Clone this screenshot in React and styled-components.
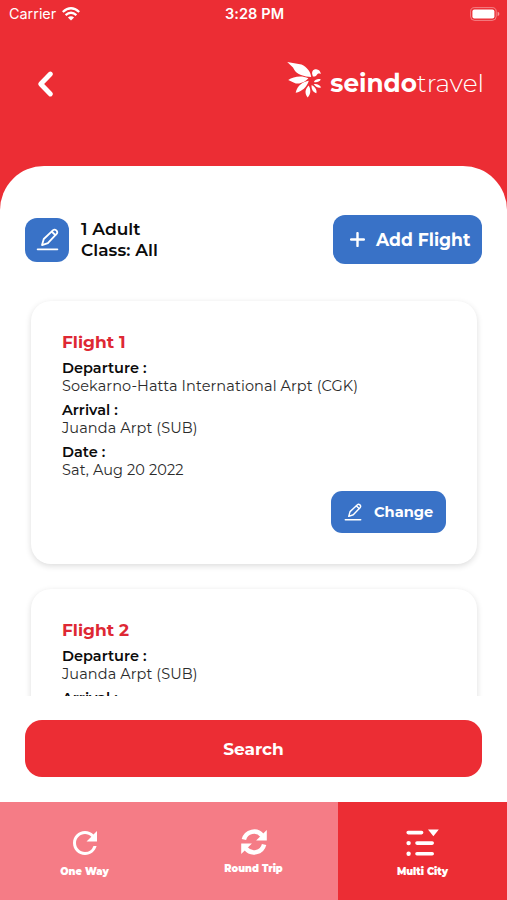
import React from "react";
import styled, { createGlobalStyle } from "styled-components";
import { MdRefresh } from "react-icons/md";

const colors = {
    red: "#ec2d34",
    redFaded: "#f57c86",
    blue: "#3972c7",
    title: "#de2834",
    text: "#0b0b0b",
    textSoft: "#2b2b2b",
};

const GlobalStyle = createGlobalStyle`
    * {
        box-sizing: border-box;
    }
    body {
        margin: 0;
        background-color: #fff;
        font-family: Montserrat, Inter, sans-serif;
    }
    button {
        border: none;
        padding: 0;
        background: none;
        font-family: inherit;
        color: inherit;
    }
    svg {
        display: block;
        flex-shrink: 0;
    }
`;

const Screen = styled.div`
    width: 507px;
    height: 900px;
    overflow: hidden;
    display: flex;
    flex-direction: column;
    background-color: ${colors.red};
    color: #fff;
`;

const Label = styled.span`
    font-size: ${(props) => props.$size}px;
    font-weight: ${(props) => props.$weight || 600};
    letter-spacing: ${(props) => props.$spacing || 0}px;
    line-height: ${(props) => props.$line || 20}px;
    color: ${(props) => props.$color || "inherit"};
    white-space: nowrap;
`;

const StatusBar = styled.div`
    height: 28px;
    padding: 0 7px 0 9px;
    display: grid;
    grid-template-columns: 1fr auto 1fr;
    align-items: center;
    font-family: Inter, Roboto, sans-serif;
`;

const Carrier = styled.div`
    display: flex;
    align-items: center;
    gap: 6px;
`;

const BatterySlot = styled.div`
    justify-self: end;
`;

const Header = styled.header`
    height: 138px;
    padding: 31px 23px 0 36px;
    display: flex;
    justify-content: space-between;
    align-items: flex-start;
`;

const BackButton = styled.button`
    margin-top: 11px;
`;

const Brand = styled.div`
    display: flex;
    align-items: flex-start;
    gap: 8px;
`;

const BrandName = styled.div`
    display: flex;
    margin-top: 8px;
`;

const Sheet = styled.main`
    height: 636px;
    padding: 49px 25px 0;
    background-color: #fff;
    border-radius: 44px 44px 0 0;
    color: ${colors.text};
    display: flex;
    flex-direction: column;
`;

const Toolbar = styled.div`
    height: 49px;
    display: flex;
    align-items: center;
`;

const EditTile = styled.button`
    width: 44px;
    height: 44px;
    margin-right: 12px;
    border-radius: 12px;
    background-color: ${colors.blue};
    color: #fff;
    display: grid;
    place-items: center;
`;

const Summary = styled.div`
    flex: 1;
    display: flex;
    flex-direction: column;
`;

const AddButton = styled.button`
    width: 149px;
    height: 49px;
    padding-left: 17px;
    border-radius: 12px;
    background-color: ${colors.blue};
    color: #fff;
    display: flex;
    align-items: center;
    gap: 11px;
`;

const FlightList = styled.div`
    height: 432px;
    margin: 0 -25px;
    padding: 37px 30px 0 31px;
    overflow: hidden;
`;

const Card = styled.section`
    height: 263px;
    margin-bottom: 24.5px;
    padding: 31px;
    border-radius: 20px;
    background-color: #fff;
    box-shadow: 0 2px 6px rgba(0, 0, 0, 0.14);
    display: flex;
    flex-direction: column;
`;

const Field = styled.div`
    margin-bottom: 6px;
    display: flex;
    flex-direction: column;
`;

const Fields = styled.div`
    margin-top: 7px;
`;

const ChangeButton = styled.button`
    width: 115px;
    height: 42px;
    margin-top: auto;
    padding-left: 13px;
    align-self: flex-end;
    border-radius: 11px;
    background-color: ${colors.blue};
    color: #fff;
    display: flex;
    align-items: center;
    gap: 12px;
`;

const SearchButton = styled.button`
    height: 57px;
    margin-top: 24px;
    border-radius: 17px;
    background-color: ${colors.red};
    color: #fff;
`;

const TabBar = styled.nav`
    height: 98px;
    display: grid;
    grid-template-columns: 169px 169px 169px;
    background-color: #fff;
`;

const Tab = styled.button`
    background-color: ${(props) => (props.$active ? colors.red : colors.redFaded)};
    color: #fff;
    display: flex;
    flex-direction: column;
    align-items: center;
    justify-content: flex-start;
    padding-top: 22px;
`;

const TabIcon = styled.div`
    height: ${(props) => props.$height}px;
    display: flex;
    align-items: center;
`;

const WifiIcon = () => (
    <svg width="18" height="14" viewBox="0 0 18 14" fill="none" stroke="#fff" strokeWidth="2.3">
        <path d="M0.8 5Q9-2.4 17.2 5" />
        <path d="M3.6 8.2Q9 3.4 14.4 8.2" />
        <path d="M5.9 10.4Q9 8 12.1 10.4L9 13.6Z" fill="#fff" stroke="none" />
    </svg>
);

const BatteryIcon = () => (
    <svg width="30" height="14" viewBox="0 0 30 14">
        <rect x="0.6" y="0.6" width="25.6" height="12.8" rx="4" fill="none" stroke="#fff" strokeOpacity="0.4" />
        <rect x="2.4" y="2.4" width="22" height="9.2" rx="2" fill="#fff" />
        <path d="M27.6 4.8Q29.4 5.4 29.4 7T27.6 9.2Z" fill="#fff" fillOpacity="0.5" />
    </svg>
);

const BackIcon = () => (
    <svg width="20" height="28" viewBox="0 0 20 28" fill="none" stroke="#fff" strokeWidth="4.9" strokeLinecap="round" strokeLinejoin="round">
        <path d="M14.4 4L4.7 14L14.4 24" />
    </svg>
);

const BirdLogo = () => (
    <svg width="35" height="39" viewBox="0 -1.6 35 39" fill="#fff">
        <path d="M0.2 1.5L14.5 3.8C20 6.6 23.6 10.8 24.2 16.3C17.5 15.9 9.5 13.9 7.1 8.8L6 6.8Z" />
        <path d="M25.3 14C24.5 10.6 26.3 8.4 29.2 8.6C31.8 8.8 33.3 10.4 33.9 13.4C31.5 12.5 30.6 12.8 29.6 14.6C28.7 15.8 27.3 16 25.9 16Z" />
        <path d="M1.2 19.5C6.5 15.9 14.5 14.7 21.4 17.7C18.2 21.7 11.5 24.4 7.1 22.1Z" />
        <path d="M21.8 20.2C15.9 21.2 10 24.9 8.7 32.2C14.9 31.2 20 26.2 21.8 20.2Z" />
        <path d="M21.6 25C17.9 28.8 17.4 33.4 20.7 36.8C23.8 33.6 24.2 29 21.6 25Z" />
        <path d="M24.6 24.5C24.2 28.4 25.7 31.6 29.4 32.6C30.1 29.2 28 26.3 24.6 24.5Z" />
        <path d="M26.7 23.4C28.3 26.2 31 27.6 34.2 27C32.8 24.2 30.1 22.9 26.7 23.4Z" />
        <path d="M26.9 21.3C29.1 21.9 32.5 21.4 33.8 18.8C30.7 17.9 28.3 18.9 26.9 21.3Z" />
    </svg>
);

const PencilIcon = ({ size }) => (
    <svg width={size} height={size} viewBox="0 0 24 24" fill="none" stroke="currentColor" strokeWidth="1.9" strokeLinejoin="round" strokeLinecap="round">
        <path d="M6.3 17.8L8.1 11.5L17.9 2.3Q19.4 0.9 21.2 2.5Q22.9 4.2 21.7 5.9L12.4 15.7Z" />
        <path d="M16.6 3.9L20.2 7.4" />
        <path d="M1.7 22.3H22.3" />
    </svg>
);

const PlusIcon = () => (
    <svg width="15" height="15" viewBox="0 0 15 15" stroke="currentColor" strokeWidth="2.4" strokeLinecap="round">
        <path d="M7.5 1.1V13.9M1.1 7.5H13.9" />
    </svg>
);

const RoundTripIcon = () => (
    <svg width="26" height="26" viewBox="0 0 26 26" fill="#fff">
        <path d="M2.9 10.6A10.4 10.4 0 0 1 21.2 6.6M23.1 15.4A10.4 10.4 0 0 1 4.8 19.4" fill="none" stroke="#fff" strokeWidth="4.5" />
        <path d="M25.8 1V11.5H15.1ZM0.2 25V14.5H10.9Z" />
    </svg>
);

const MultiCityIcon = () => (
    <svg width="34" height="28" viewBox="0 0 34 28" fill="#fff" stroke="#fff">
        <path d="M2.2 3.6H15.6M11 14.1H26.2M11 24.8H26.2" strokeWidth="3.6" strokeLinecap="round" />
        <circle cx="2.6" cy="14.1" r="2.2" stroke="none" />
        <circle cx="2.6" cy="24.8" r="2.2" stroke="none" />
        <path d="M22 0.6H32.8L27.4 7.3Z" stroke="none" />
    </svg>
);

const flights = [
    {
        departure: "Soekarno-Hatta International Arpt (CGK)",
        arrival: "Juanda Arpt (SUB)",
        date: "Sat, Aug 20 2022",
    },
    {
        departure: "Juanda Arpt (SUB)",
    },
];

const FlightField = ({ name, value }) => (
    <Field>
        <Label $size={14.5} $line={18}>{name} :</Label>
        {value && (
            <Label $size={14.5} $line={18} $weight={400} $spacing={0.1} $color={colors.textSoft}>{value}</Label>
        )}
    </Field>
);

const FlightCard = ({ number, flight }) => (
    <Card>
        <Label $size={17} $weight={700} $color={colors.title}>Flight {number}</Label>
        <Fields>
            <FlightField name="Departure" value={flight.departure} />
            <FlightField name="Arrival" value={flight.arrival} />
            {flight.date && <FlightField name="Date" value={flight.date} />}
        </Fields>
        {flight.date && (
            <ChangeButton>
                <PencilIcon size={18} />
                <Label $size={14.6} $weight={700}>Change</Label>
            </ChangeButton>
        )}
    </Card>
);

const App = () => (
    <>
        <GlobalStyle />
        <Screen>
            <StatusBar>
                <Carrier>
                    <Label $size={14.4} $weight={400}>Carrier</Label>
                    <WifiIcon />
                </Carrier>
                <Label $size={14.5} $weight={600} $spacing={0.1}>3:28 PM</Label>
                <BatterySlot>
                    <BatteryIcon />
                </BatterySlot>
            </StatusBar>
            <Header>
                <BackButton aria-label="Back">
                    <BackIcon />
                </BackButton>
                <Brand>
                    <BirdLogo />
                    <BrandName>
                        <Label $size={24.7} $weight={700} $line={32}>seindo</Label>
                        <Label $size={24.9} $weight={300} $line={32}>travel</Label>
                    </BrandName>
                </Brand>
            </Header>
            <Sheet>
                <Toolbar>
                    <EditTile aria-label="Edit passengers">
                        <PencilIcon size={23} />
                    </EditTile>
                    <Summary>
                        <Label $size={17} $line={21} $spacing={0.05}>1 Adult</Label>
                        <Label $size={17} $line={21} $spacing={0.05}>Class: All</Label>
                    </Summary>
                    <AddButton>
                        <PlusIcon />
                        <Label $size={17.2} $weight={700}>Add Flight</Label>
                    </AddButton>
                </Toolbar>
                <FlightList>
                    {flights.map((flight, index) => (
                        <FlightCard key={index} number={index + 1} flight={flight} />
                    ))}
                </FlightList>
                <SearchButton>
                    <Label $size={17} $weight={700}>Search</Label>
                </SearchButton>
            </Sheet>
            <TabBar>
                <Tab>
                    <TabIcon $height={38}>
                        <MdRefresh size={36} />
                    </TabIcon>
                    <Label $size={9.8} $weight={900}>One Way</Label>
                </Tab>
                <Tab>
                    <TabIcon $height={35}>
                        <RoundTripIcon />
                    </TabIcon>
                    <Label $size={9.8} $weight={900}>Round Trip</Label>
                </Tab>
                <Tab $active>
                    <TabIcon $height={38}>
                        <MultiCityIcon />
                    </TabIcon>
                    <Label $size={9.8} $weight={900}>Multi City</Label>
                </Tab>
            </TabBar>
        </Screen>
    </>
);

export default App;
